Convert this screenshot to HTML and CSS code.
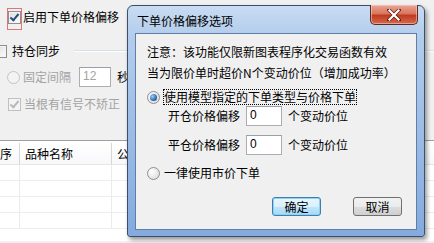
FILE: index.html
```html
<!DOCTYPE html>
<html lang="zh-CN">
<head>
    <meta charset="UTF-8">
    <title>下单价格偏移选项</title>
    <link rel="stylesheet" href="styles.css">
</head>
<body>

    <!-- Painel de fundo -->
    <div class="page">
        <div class="row row-enable">
            <span class="mark-box"><span class="check checked"></span></span>
            <span class="label">启用下单价格偏移</span>
        </div>

        <div class="row row-sync">
            <span class="check sync-check"></span>
            <span class="label">持仓同步</span>
            <span class="group-line"></span>
        </div>

        <div class="row row-interval">
            <span class="radio disabled"></span>
            <span class="label grey">固定间隔</span>
            <span class="field grey small-field">12</span>
            <span class="label">秒</span>
        </div>

        <div class="row row-signal">
            <span class="check checked disabled"></span>
            <span class="label grey">当根有信号不矫正</span>
        </div>

        <div class="table">
            <div class="thead">
                <div class="cell c1">序</div>
                <div class="cell c2">品种名称</div>
                <div class="cell c3">公</div>
            </div>
            <div class="trow"><div class="cell c1"></div><div class="cell c2"></div><div class="cell c3"></div></div>
            <div class="trow"><div class="cell c1"></div><div class="cell c2"></div><div class="cell c3"></div></div>
            <div class="trow"><div class="cell c1"></div><div class="cell c2"></div><div class="cell c3"></div></div>
            <div class="trow"><div class="cell c1"></div><div class="cell c2"></div><div class="cell c3"></div></div>
        </div>
    </div>

    <!-- Janela de diálogo -->
    <div class="dialog">
        <div class="titlebar">
            <span class="title">下单价格偏移选项</span>
            <span class="close-btn">
                <svg width="14" height="12" viewBox="0 0 14 12">
                    <path d="M2 1 L12 11 M12 1 L2 11" stroke="#5a1a10" stroke-width="3.6" stroke-linecap="square"/>
                    <path d="M2.5 1.5 L11.5 10.5 M11.5 1.5 L2.5 10.5" stroke="#fff" stroke-width="2.2" stroke-linecap="square"/>
                </svg>
            </span>
        </div>
        <div class="client">
            <p class="note">注意：该功能仅限新图表程序化交易函数有效</p>
            <p class="note note2">当为限价单时超价N个变动价位（增加成功率）</p>

            <div class="opt opt-model">
                <span class="radio checked"></span>
                <span class="label focus">使用模型指定的下单类型与价格下单</span>
            </div>

            <div class="offset-row first">
                <span class="label">开仓价格偏移</span>
                <span class="field">0</span>
                <span class="label">个变动价位</span>
            </div>
            <div class="offset-row">
                <span class="label">平仓价格偏移</span>
                <span class="field">0</span>
                <span class="label">个变动价位</span>
            </div>

            <div class="opt opt-market">
                <span class="radio"></span>
                <span class="label">一律使用市价下单</span>
            </div>

            <div class="buttons">
                <span class="btn btn-default">确定</span>
                <span class="btn">取消</span>
            </div>
        </div>
    </div>

</body>
</html>
```

FILE: styles.css
```css
body {
    margin: 0;
    width: 434px;
    height: 243px;
    overflow: hidden;
    background-color: #f0f0f0;
    font-family: "Noto Sans CJK SC", "Liberation Sans", sans-serif;
    font-size: 12px;
    line-height: 14px;
    color: #000;
    position: relative;
}

.page {
    width: 434px;
}

.row {
    display: flex;
    align-items: center;
}

.label {
    white-space: nowrap;
}

.grey {
    color: #a3a3a3;
}

/* caixas de seleção */
.check {
    width: 11px;
    height: 11px;
    border: 1px solid #8e8f8f;
    background: linear-gradient(135deg, #dcdcdc, #fdfdfd);
    box-shadow: inset 0 0 0 1px #f4f4f4;
    position: relative;
    flex: none;
}

.check.checked::after {
    content: "";
    position: absolute;
    left: 3px;
    top: 0;
    width: 3px;
    height: 7px;
    border: solid #2b4a84;
    border-width: 0 2px 2px 0;
    transform: rotate(40deg);
}

.check.disabled {
    border-color: #c0c0c0;
    background: #f4f4f4;
}

.check.disabled.checked::after {
    border-color: #b8b8b8;
}

.radio {
    width: 11px;
    height: 11px;
    border: 1px solid #8e8f8f;
    border-radius: 50%;
    background: radial-gradient(circle at 35% 35%, #ffffff, #d4d4d4);
    position: relative;
    flex: none;
}

.radio.checked::after {
    content: "";
    position: absolute;
    left: 2px;
    top: 2px;
    width: 7px;
    height: 7px;
    border-radius: 50%;
    background: radial-gradient(circle at 35% 35%, #9fd0f5, #1d5aa8 70%, #15417a);
}

.radio.disabled {
    border-color: #c4c4c4;
    background: #f3f3f3;
}

.field {
    background: #fff;
    border: 1px solid #abadb3;
    border-top-color: #9a9ea6;
    height: 18px;
    line-height: 16px;
    padding-left: 3px;
    box-sizing: content-box;
    font-family: "Liberation Sans", sans-serif;
}

/* linha 1 */
.row-enable {
    padding: 8px 0 0 7px;
    align-items: flex-start;
}

.mark-box {
    width: 13px;
    border: 1px solid #e0737c;
    display: flex;
    justify-content: center;
    padding-top: 2px;
    box-sizing: content-box;
    height: 18px;
}

.row-enable .label {
    margin: 2px 0 0 1px;
}

/* linha 2 */
.row-sync {
    margin-top: 14px;
}

.sync-check {
    margin-left: -6px;
    margin-right: 5px;
}

.group-line {
    flex: 1;
    height: 0;
    border-top: 1px solid #d5dfe5;
    border-bottom: 1px solid #fff;
    margin-left: 14px;
}

/* linha 3 */
.row-interval {
    margin-top: 9px;
    padding-left: 7px;
}

.row-interval .label.grey {
    margin-left: 3px;
}

.small-field {
    width: 27px;
    margin-left: 8px;
    margin-right: 6px;
}

/* linha 4 */
.row-signal {
    margin-top: 10px;
    padding-left: 8px;
}

.row-signal .label {
    margin-left: 3px;
}

/* tabela */
.table {
    margin-top: 29px;
    border-top: 1px solid #a0a0a0;
    background: #fff;
    height: 100px;
}

.thead, .trow {
    display: flex;
}

.thead {
    margin-top: 2px;
    height: 21px;
    border-bottom: 1px solid #e5e5e5;
    background: linear-gradient(#ffffff, #f7f8fa);
}

.trow {
    height: 15px;
    border-bottom: 1px solid #ededed;
}

.cell {
    box-sizing: border-box;
    border-right: 1px solid #ebebeb;
    line-height: 21px;
    white-space: nowrap;
}

.thead .cell {
    border-right-color: #d5d5d5;
}

.c1 { width: 20px; padding-left: 0; }
.c2 { width: 92px; padding-left: 5px; }
.c3 { width: 100px; padding-left: 5px; }

/* diálogo */
.dialog {
    position: absolute;
    left: 127px;
    top: 5px;
    width: 298px;
    height: 232px;
    box-sizing: border-box;
    border: 1px solid #3a4f6e;
    border-radius: 6px 6px 3px 3px;
    background: linear-gradient(#c8dcf2 0, #b3cdec 30px, #84aade 100%);
    box-shadow: 2px 3px 4px rgba(0, 0, 0, 0.4);
    padding: 0 7px 6px 7px;
    display: flex;
    flex-direction: column;
}

.titlebar {
    height: 27px;
    display: flex;
    align-items: center;
    position: relative;
}

.title {
    margin-left: 2px;
    margin-top: 2px;
    color: #000;
}

.close-btn {
    position: absolute;
    right: -1px;
    top: -1px;
    width: 46px;
    height: 19px;
    border: 1px solid #5c2a22;
    border-top: none;
    border-radius: 0 0 5px 5px;
    background: linear-gradient(#e9a595 0, #d8765f 45%, #c23b1f 55%, #d26a4e 100%);
    box-shadow: inset 0 0 0 1px rgba(255, 220, 210, 0.5);
    display: flex;
    justify-content: center;
    align-items: center;
}

.client {
    flex: 1;
    background: #f0f0f0;
    border: 1px solid #5f7fa8;
    padding: 11px 0 0 11px;
}

.note {
    margin: 0;
}

.note2 {
    margin-top: 7px;
}

.opt {
    display: flex;
    align-items: center;
}

.opt .radio {
    margin-right: 4px;
}

.opt-model {
    margin-top: 10px;
}

.focus {
    outline: 1px dotted #000;
    outline-offset: 0;
}

.offset-row {
    display: flex;
    align-items: center;
    padding-left: 21px;
    margin-top: 9px;
}

.offset-row.first {
    margin-top: 2px;
}

.offset-row .field {
    width: 31px;
    margin: 0 6px;
}

.opt-market {
    margin-top: 11px;
}

.buttons {
    display: flex;
    justify-content: flex-end;
    gap: 32px;
    margin-top: 17px;
    padding-right: 14px;
}

.btn {
    width: 47px;
    height: 17px;
    border: 1px solid #707070;
    border-radius: 3px;
    background: linear-gradient(#f2f2f2 0, #ebebeb 50%, #dddddd 51%, #cfcfcf 100%);
    text-align: center;
    line-height: 17px;
}

.btn-default {
    border-color: #3c7fb1;
    background: linear-gradient(#eaf6fd 0, #d9f0fc 50%, #bee6fd 51%, #a7d9f5 100%);
    box-shadow: inset 0 0 0 1px #8fd1f3;
}
```
